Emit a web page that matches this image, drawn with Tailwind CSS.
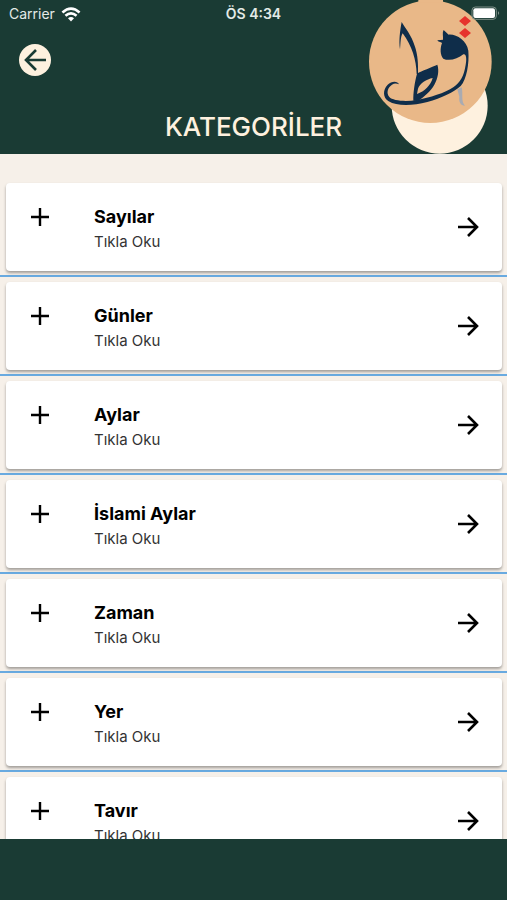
<!DOCTYPE html>
<html lang="tr">
<head>
    <meta charset="UTF-8">
    <meta name="viewport" content="width=device-width, initial-scale=1.0">
    <title>Kategoriler</title>
    <script src="https://cdn.jsdelivr.net/npm/@tailwindcss/browser@4"></script>
</head>
<body class="bg-[#f6f0e9] font-['Inter',sans-serif]">
    <div class="h-screen flex flex-col overflow-hidden">
        <header class="relative shrink-0 bg-[#1a3b34] pb-2.5">
            <!-- Logo -->
            <svg class="absolute top-0 right-0 w-[157px] h-[154px]" viewBox="0 0 471 462" role="img" aria-label="Logo">
                <circle cx="269" cy="317" r="144" fill="#fef1df"/>
                <circle cx="241" cy="185" r="184" fill="#e9b888"/>
                <path d="M205 0h74v8h-74z" fill="#e9b888"/>
                <g fill="#0f2d4a">
                    <path d="M155 66C165 84 184 104 195 140C203 164 205 190 204 222L200 222C199 180 186 138 158 100C151 112 152 130 150 148C146 122 150 92 155 66Z"/>
                    <path d="M147 253C143 242 124 243 113 254C98 269 98 293 116 304C140 319 188 318 232 306C275 294 312 277 332 258C350 238 358 190 355 152C350 122 320 102 296 104L281 90C276 98 280 108 279 119L262 121C266 127 275 126 276 130C270 144 270 166 280 176C296 184 323 178 340 163C350 160 350 180 347 194C342 228 330 248 311 261C284 279 240 293 200 300C166 306 128 302 118 291C108 279 113 262 126 254C134 249 141 251 147 253Z"/>
                    <path fill-rule="evenodd" d="M190 302C189 280 194 246 201 221C215 212 245 202 262 194C268 212 264 234 253 254C242 274 222 290 204 303ZM201 282C224 274 242 256 248 234C230 238 209 250 204 266Z"/>
                </g>
                <path d="M322 268L335 262C340 280 332 304 345 317C331 317 326 304 328 290Z" fill="#a9abb2"/>
                <path d="M345 48L363 63L345 78L327 63ZM345 84L363 99L345 114L327 99Z" fill="#e6332c"/>
                <!-- Battery -->
                <rect x="366" y="21" width="73" height="37" rx="10" fill="none" stroke="#7d8f87" stroke-width="3"/>
                <rect x="370" y="25" width="65" height="29" rx="6" fill="#fff"/>
                <path d="M444 34q7 5 0 11z" fill="#7d8f87"/>
            </svg>

            <div class="relative grid grid-cols-3 items-center h-7 px-[9px] text-sm text-[#e3eae7]">
                <div class="flex items-center gap-1.5">
                    <span>Carrier</span>
                    <svg class="w-5 h-[15px]" viewBox="0 0 18 14" fill="none" stroke="#fff" stroke-width="2.4" aria-hidden="true">
                        <path d="M1 5.2Q9-2 17 5.2M3.8 8.2Q9 3.6 14.2 8.2"/>
                        <path d="M6.2 10.6Q9 8.2 11.8 10.6L9 13.6Z" fill="#fff" stroke="none"/>
                    </svg>
                </div>
                <span class="text-center font-semibold">ÖS 4:34</span>
            </div>

            <button type="button" aria-label="Geri" class="relative block mt-4 ml-[19px] size-8 rounded-full bg-[#fef1df] text-[#1a3b34]">
                <svg class="size-8" viewBox="0 0 32 32" fill="none" stroke="currentColor" stroke-width="2.6" aria-hidden="true">
                    <path d="M27 16H8M17 6L7 16L17 26"/>
                </svg>
            </button>

            <h1 class="relative mt-[33px] text-center text-[26px] leading-[35px] font-medium text-[#fef1df]">KATEGORİLER</h1>
        </header>

        <main class="flex-1 min-h-0 overflow-hidden pt-6">
            <ul>
                <li class="border-b-2 border-[#69aae0] pl-1.5 pr-[5px] pt-[5px] pb-1">
                    <button type="button" class="flex w-full h-[88px] items-center rounded bg-white px-[22px] text-left text-black shadow-[0_2px_3px_rgba(0,0,0,0.35)]">
                        <svg class="size-6 -mt-5 shrink-0" viewBox="0 0 24 24" fill="none" stroke="currentColor" stroke-width="2.4" aria-hidden="true"><path d="M12 3v18M3 12h18"/></svg>
                        <span class="ml-[42px] mt-1.5 flex-1">
                            <span class="block text-lg leading-6 font-bold">Sayılar</span>
                            <span class="block text-[15px] leading-[26px] text-[#333]">Tıkla Oku</span>
                        </span>
                        <svg class="size-6 shrink-0" viewBox="0 0 24 24" fill="none" stroke="currentColor" stroke-width="2.6" aria-hidden="true"><path d="M2 12h19M12 3l9 9l-9 9"/></svg>
                    </button>
                </li>
                <li class="border-b-2 border-[#69aae0] pl-1.5 pr-[5px] pt-[5px] pb-1">
                    <button type="button" class="flex w-full h-[88px] items-center rounded bg-white px-[22px] text-left text-black shadow-[0_2px_3px_rgba(0,0,0,0.35)]">
                        <svg class="size-6 -mt-5 shrink-0" viewBox="0 0 24 24" fill="none" stroke="currentColor" stroke-width="2.4" aria-hidden="true"><path d="M12 3v18M3 12h18"/></svg>
                        <span class="ml-[42px] mt-1.5 flex-1">
                            <span class="block text-lg leading-6 font-bold">Günler</span>
                            <span class="block text-[15px] leading-[26px] text-[#333]">Tıkla Oku</span>
                        </span>
                        <svg class="size-6 shrink-0" viewBox="0 0 24 24" fill="none" stroke="currentColor" stroke-width="2.6" aria-hidden="true"><path d="M2 12h19M12 3l9 9l-9 9"/></svg>
                    </button>
                </li>
                <li class="border-b-2 border-[#69aae0] pl-1.5 pr-[5px] pt-[5px] pb-1">
                    <button type="button" class="flex w-full h-[88px] items-center rounded bg-white px-[22px] text-left text-black shadow-[0_2px_3px_rgba(0,0,0,0.35)]">
                        <svg class="size-6 -mt-5 shrink-0" viewBox="0 0 24 24" fill="none" stroke="currentColor" stroke-width="2.4" aria-hidden="true"><path d="M12 3v18M3 12h18"/></svg>
                        <span class="ml-[42px] mt-1.5 flex-1">
                            <span class="block text-lg leading-6 font-bold">Aylar</span>
                            <span class="block text-[15px] leading-[26px] text-[#333]">Tıkla Oku</span>
                        </span>
                        <svg class="size-6 shrink-0" viewBox="0 0 24 24" fill="none" stroke="currentColor" stroke-width="2.6" aria-hidden="true"><path d="M2 12h19M12 3l9 9l-9 9"/></svg>
                    </button>
                </li>
                <li class="border-b-2 border-[#69aae0] pl-1.5 pr-[5px] pt-[5px] pb-1">
                    <button type="button" class="flex w-full h-[88px] items-center rounded bg-white px-[22px] text-left text-black shadow-[0_2px_3px_rgba(0,0,0,0.35)]">
                        <svg class="size-6 -mt-5 shrink-0" viewBox="0 0 24 24" fill="none" stroke="currentColor" stroke-width="2.4" aria-hidden="true"><path d="M12 3v18M3 12h18"/></svg>
                        <span class="ml-[42px] mt-1.5 flex-1">
                            <span class="block text-lg leading-6 font-bold">İslami Aylar</span>
                            <span class="block text-[15px] leading-[26px] text-[#333]">Tıkla Oku</span>
                        </span>
                        <svg class="size-6 shrink-0" viewBox="0 0 24 24" fill="none" stroke="currentColor" stroke-width="2.6" aria-hidden="true"><path d="M2 12h19M12 3l9 9l-9 9"/></svg>
                    </button>
                </li>
                <li class="border-b-2 border-[#69aae0] pl-1.5 pr-[5px] pt-[5px] pb-1">
                    <button type="button" class="flex w-full h-[88px] items-center rounded bg-white px-[22px] text-left text-black shadow-[0_2px_3px_rgba(0,0,0,0.35)]">
                        <svg class="size-6 -mt-5 shrink-0" viewBox="0 0 24 24" fill="none" stroke="currentColor" stroke-width="2.4" aria-hidden="true"><path d="M12 3v18M3 12h18"/></svg>
                        <span class="ml-[42px] mt-1.5 flex-1">
                            <span class="block text-lg leading-6 font-bold">Zaman</span>
                            <span class="block text-[15px] leading-[26px] text-[#333]">Tıkla Oku</span>
                        </span>
                        <svg class="size-6 shrink-0" viewBox="0 0 24 24" fill="none" stroke="currentColor" stroke-width="2.6" aria-hidden="true"><path d="M2 12h19M12 3l9 9l-9 9"/></svg>
                    </button>
                </li>
                <li class="border-b-2 border-[#69aae0] pl-1.5 pr-[5px] pt-[5px] pb-1">
                    <button type="button" class="flex w-full h-[88px] items-center rounded bg-white px-[22px] text-left text-black shadow-[0_2px_3px_rgba(0,0,0,0.35)]">
                        <svg class="size-6 -mt-5 shrink-0" viewBox="0 0 24 24" fill="none" stroke="currentColor" stroke-width="2.4" aria-hidden="true"><path d="M12 3v18M3 12h18"/></svg>
                        <span class="ml-[42px] mt-1.5 flex-1">
                            <span class="block text-lg leading-6 font-bold">Yer</span>
                            <span class="block text-[15px] leading-[26px] text-[#333]">Tıkla Oku</span>
                        </span>
                        <svg class="size-6 shrink-0" viewBox="0 0 24 24" fill="none" stroke="currentColor" stroke-width="2.6" aria-hidden="true"><path d="M2 12h19M12 3l9 9l-9 9"/></svg>
                    </button>
                </li>
                <li class="border-b-2 border-[#69aae0] pl-1.5 pr-[5px] pt-[5px] pb-1">
                    <button type="button" class="flex w-full h-[88px] items-center rounded bg-white px-[22px] text-left text-black shadow-[0_2px_3px_rgba(0,0,0,0.35)]">
                        <svg class="size-6 -mt-5 shrink-0" viewBox="0 0 24 24" fill="none" stroke="currentColor" stroke-width="2.4" aria-hidden="true"><path d="M12 3v18M3 12h18"/></svg>
                        <span class="ml-[42px] mt-1.5 flex-1">
                            <span class="block text-lg leading-6 font-bold">Tavır</span>
                            <span class="block text-[15px] leading-[26px] text-[#333]">Tıkla Oku</span>
                        </span>
                        <svg class="size-6 shrink-0" viewBox="0 0 24 24" fill="none" stroke="currentColor" stroke-width="2.6" aria-hidden="true"><path d="M2 12h19M12 3l9 9l-9 9"/></svg>
                    </button>
                </li>
            </ul>
        </main>

        <footer class="h-[61px] shrink-0 bg-[#1a3b34]"></footer>
    </div>
</body>
</html>
